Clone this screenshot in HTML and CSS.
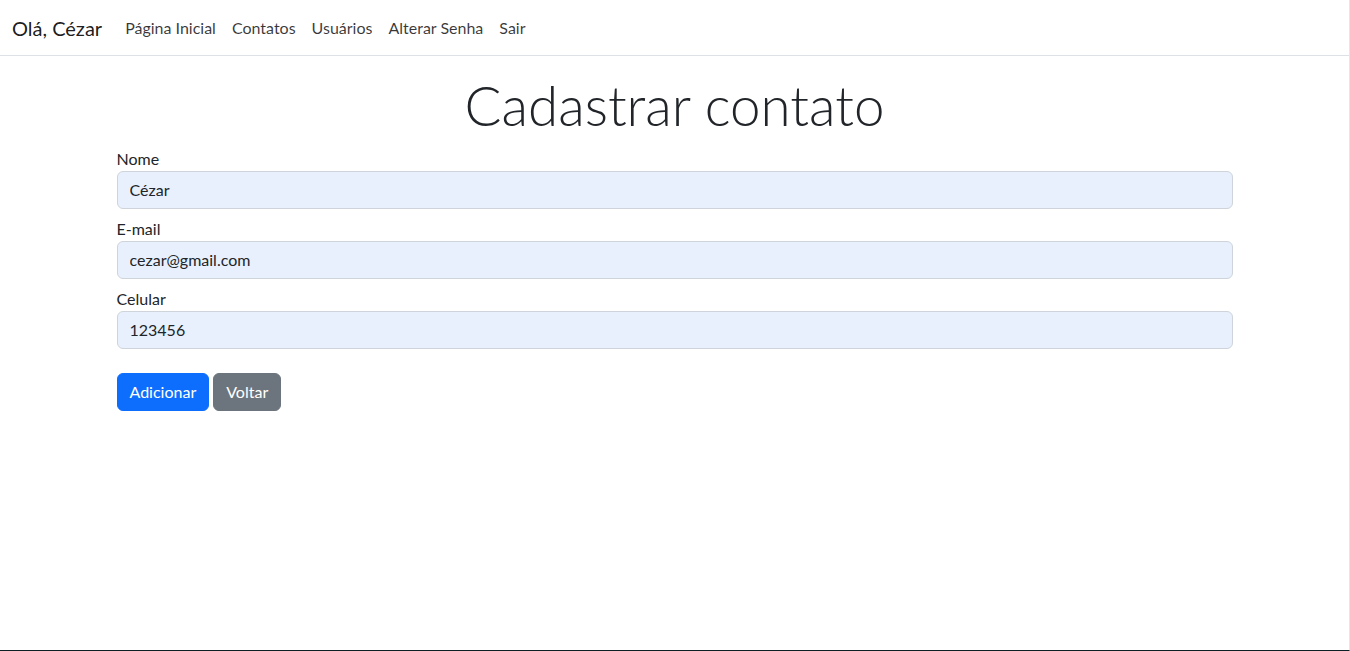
FILE: index.html
```html
<!DOCTYPE html>
<html lang="pt-BR">
<head>
<meta charset="utf-8">
<title>Cadastrar contato</title>
<link rel="stylesheet" href="styles.css">
</head>
<body>
<div class="page">
  <nav class="navbar">
    <span class="brand">Olá, Cézar</span>
    <ul class="nav">
      <li><a class="nav-link" href="#">Página Inicial</a></li>
      <li><a class="nav-link" href="#">Contatos</a></li>
      <li><a class="nav-link" href="#">Usuários</a></li>
      <li><a class="nav-link" href="#">Alterar Senha</a></li>
      <li><a class="nav-link" href="#">Sair</a></li>
    </ul>
  </nav>
  <main class="container">
    <h1 class="title">Cadastrar contato</h1>
    <form class="form">
      <div class="group">
        <label class="label" for="nome">Nome</label>
        <input class="input" id="nome" type="text" value="Cézar">
      </div>
      <div class="group">
        <label class="label" for="email">E-mail</label>
        <input class="input" id="email" type="text" value="cezar@gmail.com">
      </div>
      <div class="group">
        <label class="label" for="celular">Celular</label>
        <input class="input" id="celular" type="text" value="123456">
      </div>
      <div class="actions">
        <button class="btn btn-primary" type="button">Adicionar</button>
        <button class="btn btn-secondary" type="button">Voltar</button>
      </div>
    </form>
  </main>
</div>
</body>
</html>
```
FILE: styles.css
```css
* { box-sizing: border-box; }
html, body { margin: 0; padding: 0; height: 100%; }
body {
  font-family: "Lato", "Noto Sans", sans-serif;
  font-size: 16px;
  line-height: 1.5;
  color: #212529;
  background: #fff;
}
.page {
  width: 1350px;
  height: 651px;
  border-right: 1px solid #e6e6e6;
  border-bottom: 1px solid #0c1f22;
  overflow: hidden;
}
.navbar {
  display: flex;
  align-items: center;
  height: 56px;
  padding: 0 12px;
  border-bottom: 1px solid #dee2e6;
}
.brand {
  font-size: 20px;
  color: rgba(0,0,0,.9);
  margin-right: 15px;
  line-height: 30px;
}
.nav {
  display: flex;
  list-style: none;
  margin: 0;
  padding: 0;
}
.nav-link {
  display: block;
  padding: 8px;
  color: rgba(0,0,0,.78);
  text-decoration: none;
}
.container {
  width: 1140px;
  margin: 0 auto;
  padding: 0 12px;
}
.title {
  margin: 16px 0 8px;
  text-align: center;
  font-size: 54.7px;
  font-weight: 300;
  line-height: 67px;
  color: #212529;
}
.group { margin-bottom: 8px; }
.label { display: block; line-height: 24px; }
.input {
  display: block;
  width: 100%;
  height: 38px;
  padding: 5px 12px 7px;
  font: inherit;
  color: #212529;
  background: #e8f0fe;
  border: 1px solid #ced4da;
  border-radius: 6px;
}
.actions {
  display: flex;
  gap: 4px;
  margin-top: 24px;
}
.btn {
  height: 38px;
  padding: 6px 12px;
  font: inherit;
  color: #fff;
  border: 1px solid transparent;
  border-radius: 6px;
}
.btn-primary { background: #0d6efd; border-color: #0d6efd; }
.btn-secondary { background: #6c757d; border-color: #6c757d; }
```
